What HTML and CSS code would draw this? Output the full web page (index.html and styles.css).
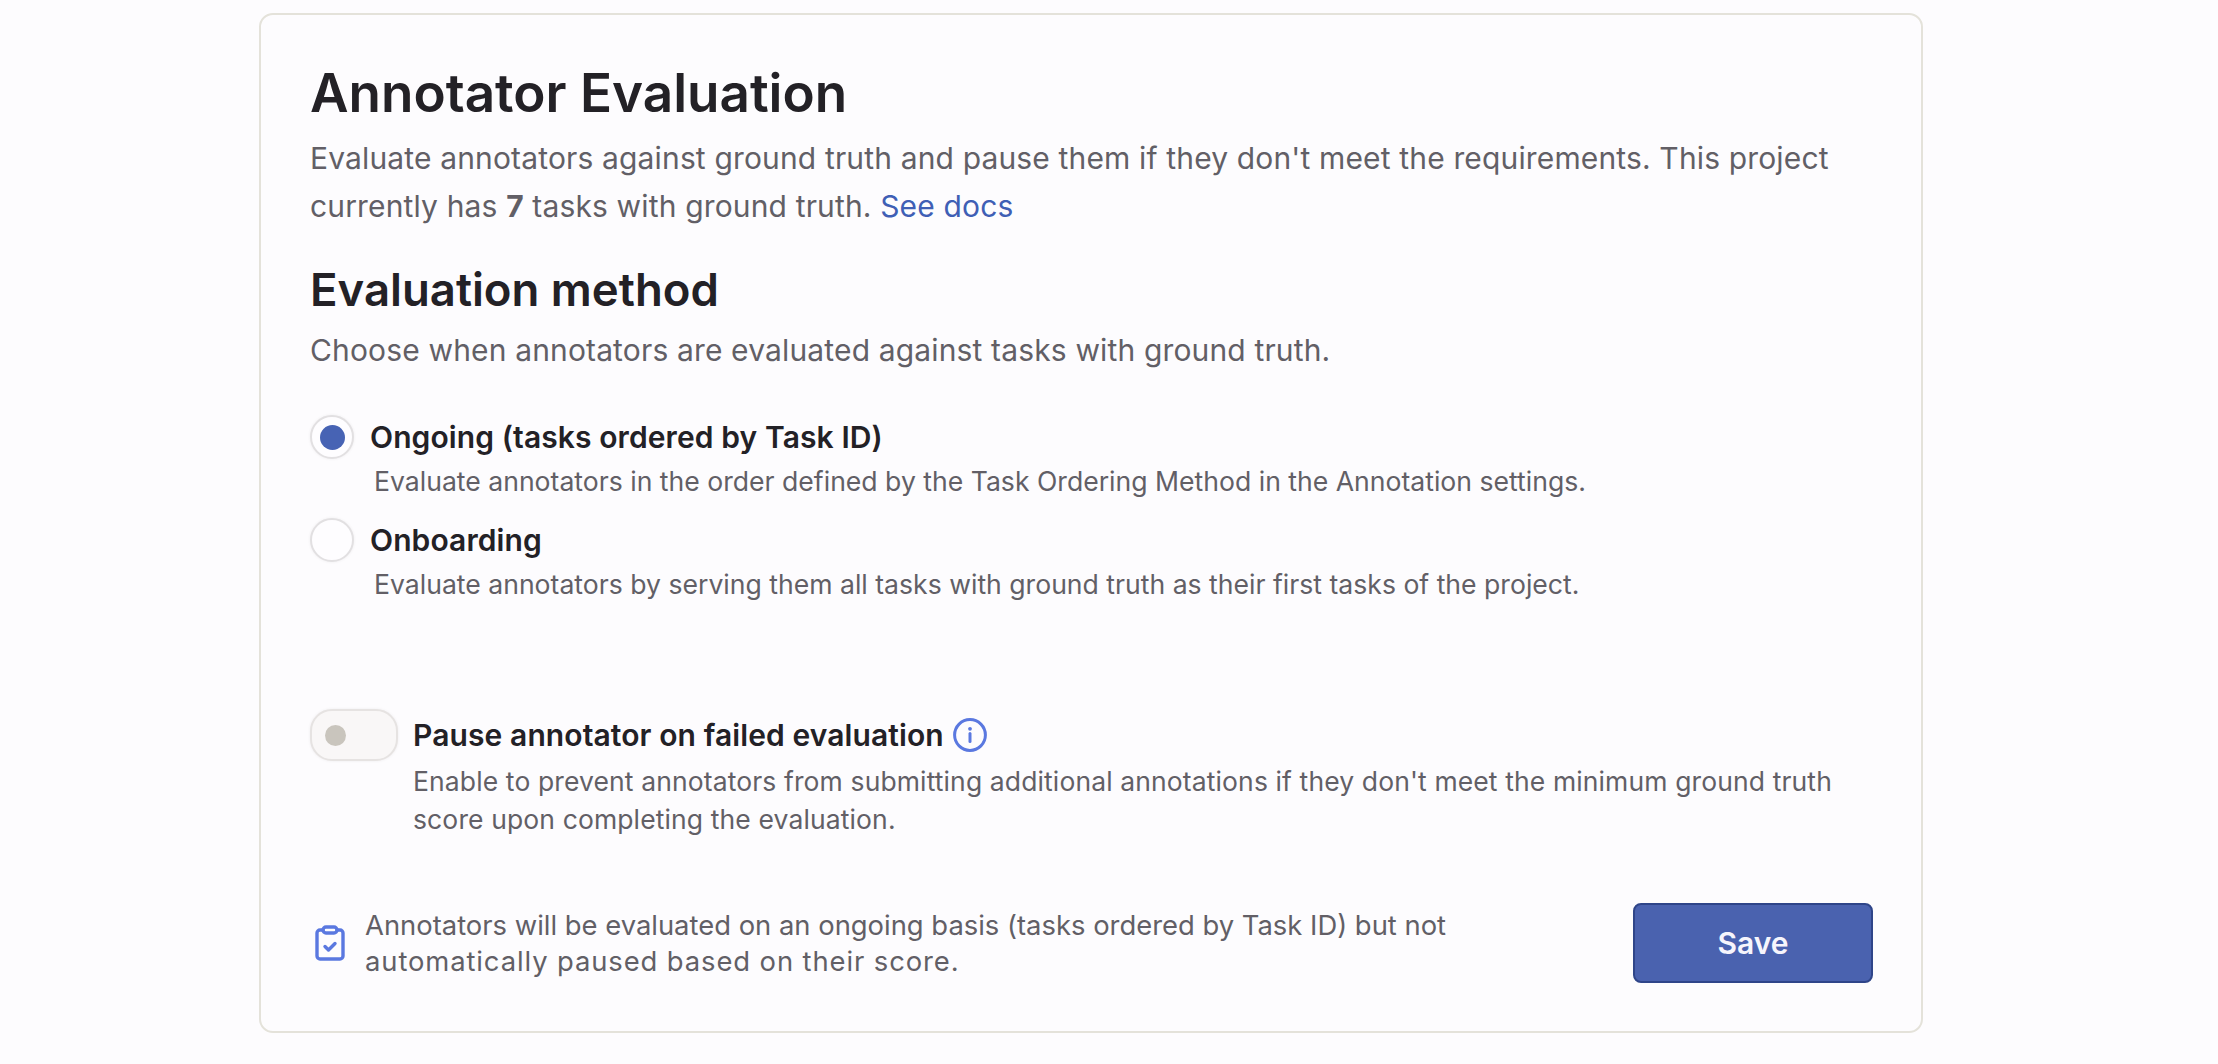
FILE: index.html
```html
<!DOCTYPE html>
<html lang="en">
<head>
    <meta charset="UTF-8">
    <title>Annotator Evaluation</title>
    <link rel="stylesheet" href="styles.css">
</head>
<body>
    <div class="card">
        <h1>Annotator Evaluation</h1>
        <p class="lead">Evaluate annotators against ground truth and pause them if they don't meet the requirements. This project currently has <b>7</b> tasks with ground truth. <a href="#">See docs</a></p>

        <h2>Evaluation method</h2>
        <p class="lead sub">Choose when annotators are evaluated against tasks with ground truth.</p>

        <div class="radio-row">
            <span class="radio checked"></span>
            <span class="option-title">Ongoing (tasks ordered by Task ID)</span>
        </div>
        <p class="option-desc">Evaluate annotators in the order defined by the Task Ordering Method in the Annotation settings.</p>

        <div class="radio-row second">
            <span class="radio"></span>
            <span class="option-title">Onboarding</span>
        </div>
        <p class="option-desc">Evaluate annotators by serving them all tasks with ground truth as their first tasks of the project.</p>

        <div class="toggle-row">
            <span class="toggle"><span class="knob"></span></span>
            <div class="toggle-text">
                <div class="toggle-title">
                    <span class="option-title">Pause annotator on failed evaluation</span>
                    <svg class="info" width="34" height="34" viewBox="0 0 34 34" fill="none" stroke="#5a78e0">
                        <circle cx="17" cy="17" r="15.400" stroke-width="3"/>
                        <path d="M17 15.500v8" stroke-width="3" stroke-linecap="round"/>
                        <circle cx="17" cy="10.800" r="1.900" fill="#5a78e0" stroke="none"/>
                    </svg>
                </div>
                <p class="toggle-desc">Enable to prevent annotators from submitting additional annotations if they don't meet the minimum ground truth score upon completing the evaluation.</p>
            </div>
        </div>

        <div class="footer">
            <div class="summary">
                <svg width="30" height="36" viewBox="0 0 30 36" fill="none" stroke="#5a78e0" stroke-width="3.400" stroke-linejoin="round" stroke-linecap="round">
                    <path d="M8 5H5a3 3 0 0 0-3 3v23a3 3 0 0 0 3 3h20a3 3 0 0 0 3-3V8a3 3 0 0 0-3-3h-3"/>
                    <rect x="8" y="2" width="14" height="6" rx="3"/>
                    <path d="M10 21.500l3.500 3.500L20 18.500"/>
                </svg>
                <p>Annotators will be evaluated on an ongoing basis (tasks ordered by Task ID) but not <span class="wide">automatically paused based on their score.</span></p>
            </div>
            <button type="button" class="save">Save</button>
        </div>
    </div>
</body>
</html>
```

FILE: styles.css
```css
body {
    margin: 0;
    height: 1064px;
    overflow: hidden;
    background: #fdfcfe;
    font-family: Inter, "Noto Sans", sans-serif;
}

.card {
    box-sizing: border-box;
    width: 1664px;
    height: 1020px;
    margin: 13px 0 0 259px;
    padding: 48px 48px 0 49px;
    border: 2px solid #e4e2da;
    border-radius: 14px;
    background: #fdfcfe;
}

h1 {
    margin: 0;
    font-size: 53px;
    line-height: 60px;
    font-weight: 600;
    color: #232126;
}

h2 {
    margin: 34px 0 0;
    font-size: 45.500px;
    line-height: 52px;
    font-weight: 600;
    color: #232126;
}

.lead {
    margin: 11px 0 0;
    font-size: 30px;
    line-height: 48px;
    letter-spacing: 0.150px;
    color: #625f66;
}

.lead.sub {
    margin-top: 10px;
}

.lead b {
    font-weight: 700;
}

.lead a {
    color: #3f5fb5;
    text-decoration: none;
}

.radio-row {
    display: flex;
    align-items: center;
    gap: 16px;
    margin-top: 41px;
}

.radio-row.second {
    margin-top: 20px;
}

.radio {
    box-sizing: border-box;
    display: flex;
    align-items: center;
    justify-content: center;
    width: 44px;
    height: 44px;
    border: 2px solid #e2e0e2;
    border-radius: 50%;
    background: #fefdff;
    box-shadow: 0 0 3px rgba(60, 50, 50, 0.08);
}

.radio.checked::after {
    content: "";
    width: 25px;
    height: 25px;
    border-radius: 50%;
    background: #4763b4;
}

.option-title {
    font-size: 30px;
    line-height: 40px;
    font-weight: 600;
    letter-spacing: 0.100px;
    color: #232126;
}

.option-desc {
    margin: 5px 0 0 64px;
    font-size: 26.600px;
    line-height: 34px;
    color: #625f66;
}

.toggle-row {
    display: flex;
    gap: 15px;
    margin-top: 108px;
}

.toggle {
    box-sizing: border-box;
    display: flex;
    align-items: center;
    flex: none;
    width: 88px;
    height: 52px;
    padding-left: 13px;
    border: 2px solid #e6e3e2;
    border-radius: 22px;
    background: #f9f7f7;
    box-shadow: 0 0 3px rgba(60, 50, 50, 0.08);
}

.knob {
    width: 21px;
    height: 21px;
    border-radius: 50%;
    background: #c9c5bd;
}

.toggle-text {
    flex: 1;
}

.toggle-title {
    display: flex;
    align-items: center;
    gap: 9px;
    height: 52px;
}

.toggle-desc {
    margin: 1px 0 0;
    font-size: 26.500px;
    line-height: 38px;
    letter-spacing: 0.120px;
    color: #625f66;
}

.footer {
    display: flex;
    align-items: center;
    justify-content: space-between;
    margin-top: 65px;
}

.summary {
    display: flex;
    align-items: center;
    gap: 20px;
    width: 1160px;
    padding-left: 5px;
}

.summary svg {
    flex: none;
}

.summary p {
    margin: 0;
    font-size: 27.400px;
    line-height: 36px;
    color: #625f66;
}

.summary .wide {
    letter-spacing: 0.900px;
}

.save {
    width: 240px;
    height: 80px;
    border: 2px solid #2f4589;
    border-radius: 8px;
    background: #4a62af;
    color: #f6f5fc;
    font-family: inherit;
    font-size: 30px;
    font-weight: 600;
}
```
